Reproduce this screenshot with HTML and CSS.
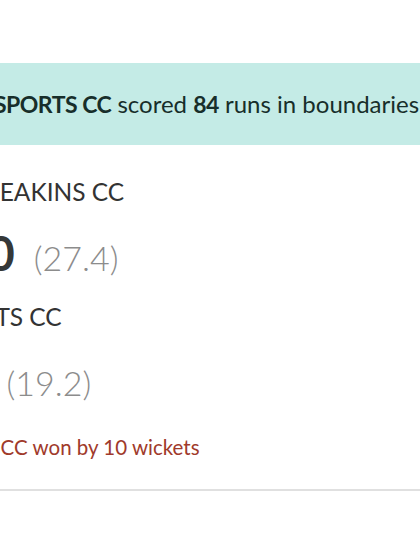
FILE: index.html
```html
<!DOCTYPE html>
<html lang="en">
<head>
<meta charset="utf-8">
<title>Match summary</title>
<link rel="stylesheet" href="styles.css">
</head>
<body>
<main class="viewport">
  <section class="card">
    <div class="highlight">
      <p class="highlight-text"><strong>SPORTS CC</strong> scored <strong>84</strong> runs in boundaries</p>
    </div>
    <div class="innings-list">
      <div class="innings">
        <div class="team">TIEBREAKINS CC</div>
        <div class="score"><span class="runs">100</span><span class="overs">(27.4)</span></div>
      </div>
      <div class="innings">
        <div class="team">SPORTS CC</div>
        <div class="score"><span class="runs">99</span><span class="overs">(19.2)</span></div>
      </div>
    </div>
    <footer class="result">SPORTS CC won by 10 wickets</footer>
  </section>
</main>
</body>
</html>
```

FILE: styles.css
```css
html, body {
  margin: 0;
  padding: 0;
  background: #ffffff;
}

body {
  width: 420px;
  height: 560px;
  overflow: hidden;
  font-family: Lato, "Open Sans", sans-serif;
}

.viewport {
  padding-top: 63px;
}

/* The card is wider than the window and sits slightly off its left edge */
.card {
  width: 579px;
  margin-left: -83px;
  border-bottom: 2px solid #e0e0e0;
}

.highlight {
  background: #c4ebe6;
  height: 82px;
  display: flex;
  align-items: center;
  justify-content: center;
}

.highlight-text {
  margin: 0;
  font-size: 24px;
  line-height: 1.2;
  color: #172e2a;
  white-space: nowrap;
}

.highlight-text strong {
  font-size: 23px;
  font-weight: 700;
  letter-spacing: -0.5px;
}

.innings-list {
  padding: 32px 16px 0;
  display: flex;
  flex-direction: column;
  gap: 20px;
}

.innings {
  display: flex;
  flex-direction: column;
  gap: 19px;
}

.team {
  font-size: 24.5px;
  line-height: 1.2;
  color: #333333;
  white-space: nowrap;
}

.score {
  display: flex;
  align-items: baseline;
  gap: 19px;
  line-height: 1.2;
  white-space: nowrap;
}

.runs {
  font-size: 47px;
  font-weight: 700;
  color: #353838;
}

.overs {
  font-size: 34px;
  font-weight: 300;
  color: #8c8c8c;
}

.result {
  padding: 28px 3px 30px;
  font-size: 20.5px;
  line-height: 1.2;
  color: #a03a2b;
  white-space: nowrap;
}
```
